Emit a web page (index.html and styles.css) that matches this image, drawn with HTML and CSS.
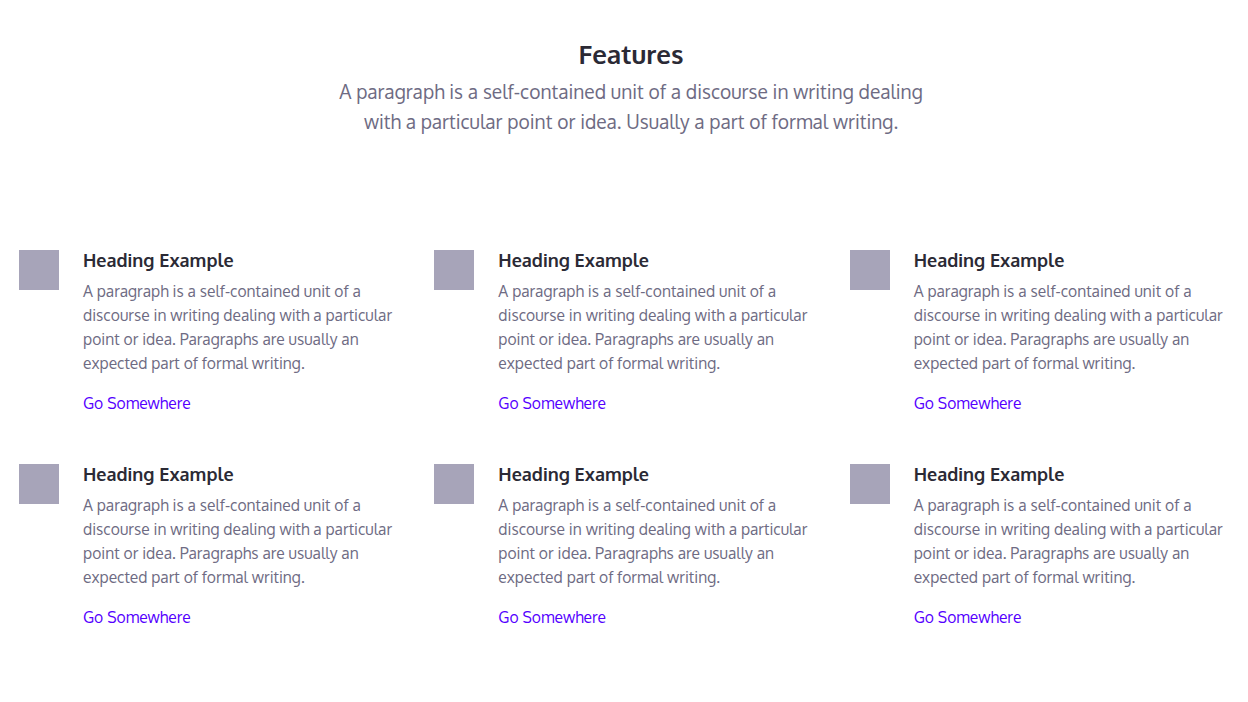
FILE: index.html
```html
<!DOCTYPE html>
<html lang="en">
<head>
<meta charset="utf-8">
<title>Features</title>
<link rel="stylesheet" href="styles.css">
</head>
<body>
<section class="features">
  <header class="intro">
    <h2 class="title">Features</h2>
    <p class="lead">A paragraph is a self-contained unit of a discourse in writing dealing with a particular point or idea. Usually a part of formal writing.</p>
  </header>
  <div class="grid">
    <div class="item"><div class="icon"></div><div class="body"><h3>Heading Example</h3><p>A paragraph is a self-contained unit of a discourse in writing dealing with a particular point or idea. Paragraphs are usually an expected part of formal writing.</p><a href="#">Go Somewhere</a></div></div>
    <div class="item"><div class="icon"></div><div class="body"><h3>Heading Example</h3><p>A paragraph is a self-contained unit of a discourse in writing dealing with a particular point or idea. Paragraphs are usually an expected part of formal writing.</p><a href="#">Go Somewhere</a></div></div>
    <div class="item"><div class="icon"></div><div class="body"><h3>Heading Example</h3><p>A paragraph is a self-contained unit of a discourse in writing dealing with a particular point or idea. Paragraphs are usually an expected part of formal writing.</p><a href="#">Go Somewhere</a></div></div>
    <div class="item"><div class="icon"></div><div class="body"><h3>Heading Example</h3><p>A paragraph is a self-contained unit of a discourse in writing dealing with a particular point or idea. Paragraphs are usually an expected part of formal writing.</p><a href="#">Go Somewhere</a></div></div>
    <div class="item"><div class="icon"></div><div class="body"><h3>Heading Example</h3><p>A paragraph is a self-contained unit of a discourse in writing dealing with a particular point or idea. Paragraphs are usually an expected part of formal writing.</p><a href="#">Go Somewhere</a></div></div>
    <div class="item"><div class="icon"></div><div class="body"><h3>Heading Example</h3><p>A paragraph is a self-contained unit of a discourse in writing dealing with a particular point or idea. Paragraphs are usually an expected part of formal writing.</p><a href="#">Go Somewhere</a></div></div>
  </div>
</section>
</body>
</html>
```
FILE: styles.css
```css
* { box-sizing: border-box; }
html, body { margin: 0; padding: 0; background: #fff; }
body {
  font-family: Oxygen, "PT Sans", "Noto Sans", sans-serif;
  color: #2b2a35;
}
.features { padding: 36px 0 0; }
.intro { text-align: center; padding-left: 14px; }
.title {
  margin: 0;
  font-size: 26px;
  font-weight: 700;
  line-height: 36px;
  color: #2b2a35;
}
.lead {
  margin: 5px auto 0;
  max-width: 620px;
  font-size: 19.2px;
  line-height: 30px;
  color: #6e6b83;
}
.grid {
  display: grid;
  grid-template-columns: repeat(3, 1fr);
  row-gap: 49px;
  margin-top: 113px;
  padding-right: 2px;
}
.item {
  display: flex;
  gap: 24px;
  padding: 0 12px 0 19px;
  align-items: flex-start;
}
.icon {
  flex: 0 0 40px;
  width: 40px;
  height: 40px;
  background: #a7a4b9;
}
.body h3 {
  margin: 0 0 9px;
  font-size: 18px;
  font-weight: 700;
  line-height: 20px;
  color: #2b2a35;
}
.body p {
  margin: 0 0 16px;
  font-size: 15.6px;
  line-height: 24px;
  color: #6e6b83;
}
.body a {
  display: inline-block;
  font-size: 15.6px;
  line-height: 24px;
  color: #5500ff;
  text-decoration: none;
}
```
